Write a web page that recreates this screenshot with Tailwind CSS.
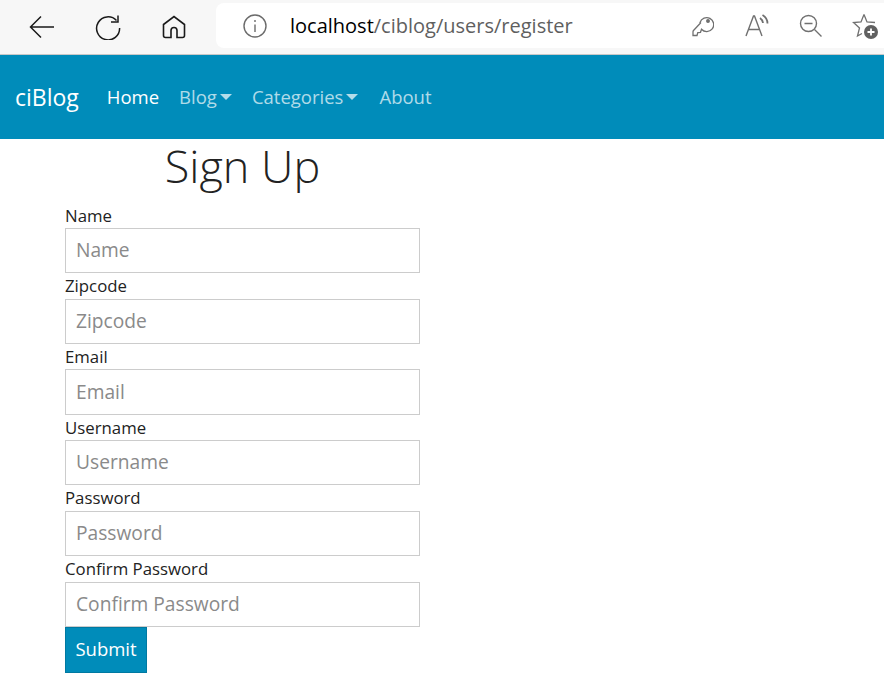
<!doctype html>
<html>

<head>
    <meta charset="UTF-8">
    <meta name="viewport" content="width=device-width, initial-scale=1.0">
    <script src="https://cdn.jsdelivr.net/npm/@tailwindcss/browser@4"></script>
</head>

<body class="bg-white font-['Open_Sans',sans-serif] overflow-hidden">
    <!-- browser toolbar -->
    <div class="h-[55px] bg-[#f7f7f7] border-b border-[#c8c8c8] flex items-start">
        <div class="w-[216px] h-[54px] flex items-center shrink-0 text-[#1a1a1a]">
            <svg class="ml-[29px]" width="26" height="24" viewBox="0 0 26 24" fill="none" stroke="currentColor" stroke-width="1.5">
                <path d="M1.5 12H25M12 1.500 1.500 12 12 22.500" />
            </svg>
            <svg class="ml-[40px]" width="26" height="26" viewBox="0 0 26 26" fill="none" stroke="currentColor" stroke-width="1.5">
                <path d="M21.500 6.500A11.500 11.500 0 1 0 24.600 14" />
                <path d="M23 1.500V8h-7" />
            </svg>
            <svg class="ml-[41px]" width="24" height="24" viewBox="0 0 24 24" fill="none" stroke="currentColor" stroke-width="1.6">
                <path d="M9 22.500H3.500a2 2 0 0 1-2-2V9.500L12 1.500l10.500 8v11a2 2 0 0 1-2 2H15v-7a3 3 0 0 0-6 0z" />
            </svg>
        </div>
        <div class="flex-1 h-[45px] mt-[3px] bg-white rounded-l-[8px] flex items-center">
            <svg class="ml-[27px] text-[#6b6b6b]" width="24" height="24" viewBox="0 0 24 24" fill="none" stroke="currentColor" stroke-width="1.4">
                <circle cx="12" cy="12" r="11" />
                <path d="M12 10.500V18M12 6v2" />
            </svg>
            <p class="ml-[23px] w-[402px] shrink-0 text-[20px] text-[#5f5f5f] whitespace-nowrap leading-none"><span class="text-black">localhost</span>/ciblog/users/register</p>
            <svg class="shrink-0 text-[#707070]" width="22" height="24" viewBox="0 0 22 24" fill="none" stroke="currentColor" stroke-width="1.3">
                <path d="M8.500 9 1.500 16.500a2 2 0 0 0-.5 1.500v3.500h4l.8-3 2.700-.2 1-3a7 7 0 1 0-1.500-6.800z" />
                <circle cx="16" cy="7" r="1.300" fill="currentColor" />
            </svg>
            <svg class="ml-[31px] shrink-0 text-[#707070]" width="25" height="24" viewBox="0 0 25 24" fill="none" stroke="currentColor" stroke-width="1.4">
                <path d="M1 22 8.500 2h1L17 22M3.500 15.500h11.500" />
                <path d="M15 4a7 7 0 0 1 3 5M17.500 1a10 10 0 0 1 5 8.500" stroke-width="1.800" />
            </svg>
            <svg class="ml-[29px] shrink-0 text-[#707070]" width="24" height="24" viewBox="0 0 24 24" fill="none" stroke="currentColor" stroke-width="1.4">
                <circle cx="9.500" cy="9.500" r="8" />
                <path d="M5.500 9.500h8M15.500 15.500l7 7" />
            </svg>
            <svg class="ml-[29px] shrink-0 text-[#707070]" width="26" height="26" viewBox="0 0 26 26" fill="none" stroke="currentColor" stroke-width="1.3">
                <path d="M12 1.500 15 9l8 .5M12 1.500 9 9l-7.500.5 6 5.500-2 8 4.500-2.500" />
                <circle cx="19" cy="19" r="7" fill="#606060" stroke="none" />
                <path d="M19 15.500v7M15.500 19h7" stroke="#fff" stroke-width="1.800" />
            </svg>
        </div>
    </div>

    <!-- navbar -->
    <nav class="h-[84px] bg-[#008cba] flex items-center pl-[15px] whitespace-nowrap">
        <a class="text-white text-[23px]">ciBlog</a>
        <div class="flex items-center ml-[28px] gap-[20px] text-[#ffffffb3] text-[18.500px]">
            <a class="text-white">Home</a>
            <a class="flex items-center">Blog<span class="ml-[3px] border-x-[6px] border-t-[6px] border-x-transparent border-t-[#ffffffb3]"></span></a>
            <a class="flex items-center">Categories<span class="ml-[3px] border-x-[6px] border-t-[6px] border-x-transparent border-t-[#ffffffb3]"></span></a>
            <a class="ml-[1px]">About</a>
        </div>
    </nav>

    <!-- register form -->
    <form class="w-[355px] ml-[65px]">
        <h2 class="h-[63.600px] text-center text-[45px] font-light leading-[54px] text-[#222222]">Sign Up</h2>
        <label class="block h-[25.400px] text-[16.800px] leading-[26.500px] text-[#222222]">Name</label>
        <input placeholder="Name" class="block w-full h-[45.330px] px-[10px] pb-[2px] border border-[#cccccc] text-[19.200px] placeholder:text-[#8a8a8a] outline-none">
        <label class="block h-[25.400px] text-[16.800px] leading-[26.500px] text-[#222222]">Zipcode</label>
        <input placeholder="Zipcode" class="block w-full h-[45.330px] px-[10px] pb-[2px] border border-[#cccccc] text-[19.200px] placeholder:text-[#8a8a8a] outline-none">
        <label class="block h-[25.400px] text-[16.800px] leading-[26.500px] text-[#222222]">Email</label>
        <input placeholder="Email" class="block w-full h-[45.330px] px-[10px] pb-[2px] border border-[#cccccc] text-[19.200px] placeholder:text-[#8a8a8a] outline-none">
        <label class="block h-[25.400px] text-[16.800px] leading-[26.500px] text-[#222222]">Username</label>
        <input placeholder="Username" class="block w-full h-[45.330px] px-[10px] pb-[2px] border border-[#cccccc] text-[19.200px] placeholder:text-[#8a8a8a] outline-none">
        <label class="block h-[25.400px] text-[16.800px] leading-[26.500px] text-[#222222]">Password</label>
        <input placeholder="Password" class="block w-full h-[45.330px] px-[10px] pb-[2px] border border-[#cccccc] text-[19.200px] placeholder:text-[#8a8a8a] outline-none">
        <label class="block h-[25.400px] text-[16.800px] leading-[26.500px] text-[#222222]">Confirm Password</label>
        <input placeholder="Confirm Password" class="block w-full h-[45.330px] px-[10px] pb-[2px] border border-[#cccccc] text-[19.200px] placeholder:text-[#8a8a8a] outline-none">
        <button type="button" class="block h-[46px] w-[82px] pb-[3px] bg-[#008cba] border border-[#0079a1] text-white text-[18.500px]">Submit</button>
    </form>
</body>

</html>
